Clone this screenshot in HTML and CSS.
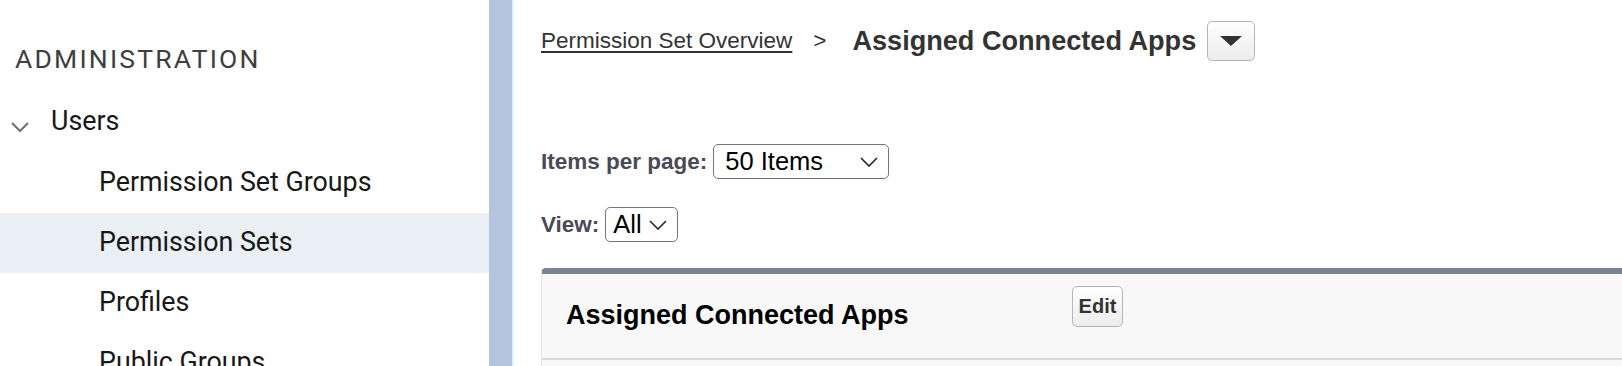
FILE: index.html
```html
<!DOCTYPE html>
<html lang="en">
<head>
  <meta charset="UTF-8" />
  <title>Assigned Connected Apps</title>
  <link rel="stylesheet" href="styles.css">
</head>
<body>
  <div class="page">
    <nav class="sidebar">
      <div class="section-title">ADMINISTRATION</div>
      <div class="nav-row nav-parent">
        <svg class="chev" width="20" height="12" viewBox="0 0 20 12"><path d="M2 2 L10 10 L18 2" fill="none" stroke="#747474" stroke-width="2.2"/></svg>
        <span>Users</span>
      </div>
      <div class="nav-row nav-child">Permission Set Groups</div>
      <div class="nav-row nav-child active">Permission Sets</div>
      <div class="nav-row nav-child">Profiles</div>
      <div class="nav-row nav-child">Public Groups</div>
    </nav>
    <div class="divider"></div>
    <main class="main">
      <div class="breadcrumb">
        <a href="#" class="crumb-link">Permission Set Overview</a>
        <span class="crumb-sep">&gt;</span>
        <h1 class="crumb-title">Assigned Connected Apps</h1>
        <button class="menu-btn">
          <svg width="22" height="10" viewBox="0 0 22 10"><path d="M0 0 H22 L11 10 Z" fill="#333"/></svg>
        </button>
      </div>

      <div class="filter-row per-page">
        <label>Items per page:</label>
        <div class="fake-select wide">
          <span>50 Items</span>
          <svg width="18" height="10" viewBox="0 0 18 10"><path d="M1 1 L9 9 L17 1" fill="none" stroke="#222" stroke-width="1.6"/></svg>
        </div>
      </div>

      <div class="filter-row view-row">
        <label>View:</label>
        <div class="fake-select narrow">
          <span>All</span>
          <svg width="18" height="10" viewBox="0 0 18 10"><path d="M1 1 L9 9 L17 1" fill="none" stroke="#222" stroke-width="1.6"/></svg>
        </div>
      </div>

      <div class="panel">
        <div class="panel-header">
          <h2 class="panel-title">Assigned Connected Apps</h2>
          <button class="edit-btn">Edit</button>
        </div>
        <div class="panel-body"></div>
      </div>
    </main>
  </div>
</body>
</html>
```
FILE: styles.css
```css
* {
  box-sizing: border-box;
  margin: 0;
  padding: 0;
}
body, html {
  height: 100%;
  overflow: hidden;
  background: #fff;
}
.page {
  display: flex;
  height: 100%;
}
.sidebar {
  width: 489px;
  flex-shrink: 0;
  font-family: Roboto, "Noto Sans", sans-serif;
  color: #181818;
  font-size: 26.8px;
}
.section-title {
  padding: 43px 0 0 15px;
  height: 93px;
  font-size: 26.5px;
  letter-spacing: 2.2px;
  color: #3e3e3c;
}
.nav-row {
  height: 60px;
  line-height: 58px;
}
.nav-parent {
  display: flex;
  align-items: center;
  padding: 0 0 4px 10px;
  gap: 21px;
}
.nav-parent .chev {
  margin-top: 12px;
}
.nav-child {
  padding-left: 99px;
}
.nav-child.active {
  background: #eaeff3;
}
.divider {
  width: 25px;
  flex-shrink: 0;
  background: #b2c4de;
  border-right: 2px solid #e6edf6;
}
.main {
  flex: 1;
  padding: 21px 0 0 27px;
  font-family: "Liberation Sans", Arial, sans-serif;
  color: #333;
}
.breadcrumb {
  display: flex;
  align-items: center;
  height: 40px;
}
.crumb-link {
  color: #333;
  font-size: 22.5px;
  text-decoration: underline;
  text-underline-offset: 3px;
}
.crumb-sep {
  font-size: 22.5px;
  margin: 0 26px 0 21px;
}
.crumb-title {
  font-size: 27.1px;
  font-weight: bold;
  color: #333;
}
.menu-btn {
  margin-left: 11px;
  width: 48px;
  height: 40px;
  border: 1px solid #b5b5b5;
  border-radius: 5px;
  background: linear-gradient(#ffffff, #ececec);
  display: flex;
  align-items: center;
  justify-content: center;
}
.filter-row {
  display: flex;
  align-items: center;
}
.filter-row label {
  font-size: 22.5px;
  font-weight: bold;
  color: #4a4a56;
  margin-right: 6px;
}
.per-page {
  margin-top: 83px;
}
.view-row {
  margin-top: 28px;
}
.fake-select {
  display: flex;
  align-items: center;
  justify-content: space-between;
  border: 1.5px solid #767676;
  border-radius: 5px;
  height: 35px;
  font-size: 25.5px;
  color: #000;
  padding: 0 10px 0 11px;
  background: #fff;
}
.fake-select.wide {
  width: 176px;
}
.fake-select.narrow {
  width: 73px;
  padding-left: 7px;
}
.panel {
  margin-top: 26px;
  background: #f8f8f8;
  border-top: 6px solid #78829a;
  border-left: 1px solid #e3e3e3;
  border-radius: 5px 0 0 0;
  height: 120px;
}
.panel-header {
  display: flex;
  align-items: flex-start;
  height: 86px;
  padding: 12px 0 0 24px;
  border-bottom: 2px solid #dbdbdb;
}
.panel-title {
  width: 506px;
  font-size: 27px;
  font-weight: bold;
  color: #000;
  margin-top: 14px;
}
.edit-btn {
  width: 51px;
  height: 41px;
  font-family: "Liberation Sans", Arial, sans-serif;
  font-size: 20px;
  font-weight: bold;
  color: #333;
  border: 1px solid #b5b5b5;
  border-radius: 5px;
  background: linear-gradient(#ffffff, #ececec);
}
```
